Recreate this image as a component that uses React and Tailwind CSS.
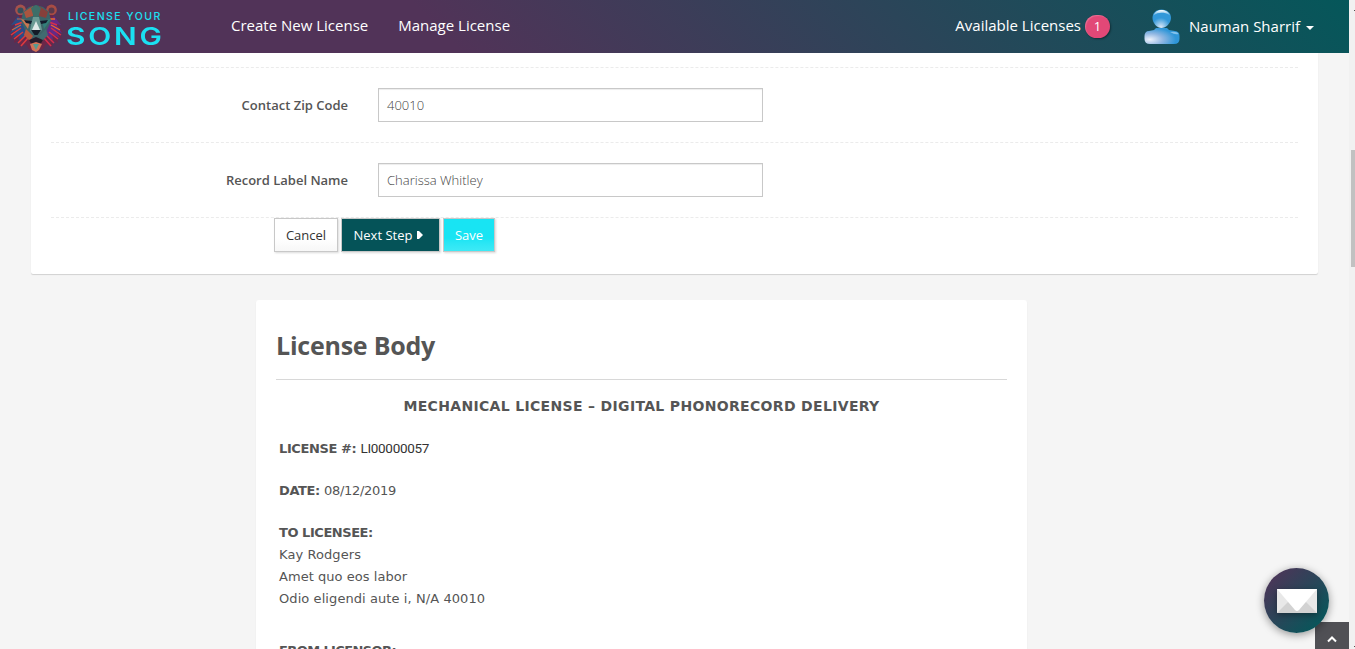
import React from "react";

function LionMark() {
  return (
    <svg width="54" height="48" viewBox="0 0 54 48" className="shrink-0">
      <circle cx="11.500" cy="6" r="5.400" fill="#a5524c" />
      <circle cx="11.500" cy="6.500" r="3" fill="#33505c" />
      <circle cx="42.500" cy="6" r="5.400" fill="#a84c44" />
      <circle cx="42.500" cy="6.500" r="3" fill="#5a3a4c" />
      <path d="M10 11 3 19 6 19 0 28 4 27 1 35 6 32 5 39 10 36 11 43 17 40 20 45 27 48 34 45 37 40 43 43 44 36 49 39 48 32 53 35 50 27 54 28 48 19 51 19 44 11Z" fill="#6c2748" />
      <path d="M9 12 2 21 7 20 1 29 8 26 3 34 11 30 10 36 16 32 16 20Z" fill="#2c4c86" />
      <path d="M45 12 52 21 47 20 53 29 46 26 51 34 43 30 44 36 38 32 38 20Z" fill="#632a86" />
      <path d="M2 31 12 24M5 35 14 28M9 39 17 31M12 42 19 34M6 21 14 18" fill="none" stroke="#de3a3e" strokeWidth="1.500" />
      <path d="M52 31 42 24M49 35 40 28M45 39 37 31M42 42 35 34M48 21 40 18" fill="none" stroke="#d62e4c" strokeWidth="1.500" />
      <path d="M3 26 12 21M8 15 14 15" fill="none" stroke="#c96846" strokeWidth="1.200" />
      <path d="M51 26 42 21M46 15 40 15" fill="none" stroke="#ef6a2c" strokeWidth="1.300" />
      <path d="M14 8 20 3 27 1 34 3 40 8 42 17 38 26 35 35 27 40 19 35 16 26 12 17Z" fill="#3c6468" />
      <path d="M15 8 24 2 24 12 17 14Z" fill="#a9553f" />
      <path d="M39 8 30 2 30 12 37 14Z" fill="#87403b" />
      <path d="M22 4 27 1 32 4 29 14 25 14Z" fill="#3d6e68" />
      <path d="M12 15 21 17 19 25Z" fill="#c87752" />
      <path d="M42 15 33 17 35 25Z" fill="#327f79" />
      <path d="M15 16 23 17 22 20 17 19Z" fill="#131c2c" />
      <path d="M39 16 31 17 32 20 37 19Z" fill="#131c2c" />
      <path d="M24 13 30 13 33 26 27 31 21 26Z" fill="#6a9a94" />
      <path d="M27 17 31 26 23 26Z" fill="#dfe9e8" />
      <path d="M22 26 32 26 28.500 31 25.500 31Z" fill="#141c28" />
      <path d="M17 25 24 32 21 37 15 31Z" fill="#b9583f" />
      <path d="M37 25 30 32 33 37 39 31Z" fill="#416b70" />
      <path d="M20 36 27 33 34 36 31 41 23 41Z" fill="#261b2b" />
      <path d="M21 40 27 38 33 40 30 46 27 48 23 46Z" fill="#d17458" />
      <path d="M24 40 30 40 27 46Z" fill="#569a90" />
    </svg>
  );
}

function Avatar() {
  return (
    <svg width="36" height="36" viewBox="0 0 36 36" className="mt-px shrink-0">
      <defs>
        <radialGradient id="body" cx="0.15" cy="0.72" r="0.75">
          <stop offset="0" stopColor="#eef2fb" />
          <stop offset="0.5" stopColor="#91b7e2" />
          <stop offset="1" stopColor="#2f96d8" />
        </radialGradient>
        <radialGradient id="chin" cx="0.45" cy="0.95" r="0.5">
          <stop offset="0" stopColor="#dce8f8" />
          <stop offset="1" stopColor="#3298d9" />
        </radialGradient>
        <linearGradient id="shine" x1="0" y1="0" x2="0" y2="1">
          <stop offset="0" stopColor="#ffffff" />
          <stop offset="1" stopColor="#52a9e0" />
        </linearGradient>
      </defs>
      <path d="M12 19 10 21 5 22C2 22 .5 24 .5 27V30Q.5 35 6 35H30Q35.500 35 35.500 30V27C35.500 24 34 22.500 31 22L25 21 23 19Z" fill="url(#body)" />
      <path d="M17.500.5C12 .5 8.500 4 8.500 9 8.500 14 13 19 17.500 19S27 14 27 9C27 4 23 .5 17.500 .5Z" fill="url(#chin)" />
      <path d="M9.500 6.500C11 2.500 14 1 17.500 1S24.500 2.500 26 6.500C23 4 20 3.700 17.500 3.700S12 4.300 9.500 6.500Z" fill="url(#shine)" />
      <path d="M26 23Q33 22 34.500 25 31 26 26 23Z" fill="#83c1eb" />
    </svg>
  );
}

function Navbar() {
  return (
    <header className="flex h-[53px] shrink-0 items-center bg-[linear-gradient(45deg,#513358_33%,#05575a_100%)] font-['Open_Sans',sans-serif] text-[15px] text-white">
      <div className="flex w-[216px] items-center pl-[9px] pt-[2px]">
        <LionMark />
        <div className="ml-[4px] flex flex-col pt-[5px] font-[Inter,sans-serif] text-[#1be0f2]">
          <span className="ml-px whitespace-nowrap text-[10.500px] font-medium leading-[12px] tracking-[1.450px]">LICENSE YOUR</span>
          <span className="-ml-px origin-left scale-x-[1.220] whitespace-nowrap text-[24.500px] font-semibold leading-[26px] tracking-[2.300px]">SONG</span>
        </div>
      </div>
      <nav className="flex gap-[30px] pb-[2px] pl-[15px]">
        <a>Create New License</a>
        <a>Manage License</a>
      </nav>
      <div className="ml-auto flex items-center pr-[35px]">
        <span className="pb-[2px]">Available Licenses</span>
        <span className="ml-[4px] flex h-[23px] w-[25px] items-center justify-center rounded-full bg-[#e24877] text-[13px] shadow-[1px_1px_2px_rgba(0,0,0,0.4),inset_1px_1px_1px_rgba(255,255,255,0.2)]">1</span>
        <span className="ml-[34px] flex items-center gap-[9px]">
          <Avatar />
          <span>Nauman Sharrif</span>
        </span>
        <span className="ml-[6px] mt-[3px] border-x-4 border-t-4 border-x-transparent border-t-white" />
      </div>
    </header>
  );
}

function Field({ label, value }) {
  return (
    <div className="flex h-[75px] items-center border-b border-dashed border-[#ebebeb]">
      <label className="w-[297px] pt-[2px] text-right text-[13px] font-semibold text-[#555]">{label}</label>
      <div className="ml-[30px] flex h-[34px] w-[385px] items-center border border-[#c8c8c8] px-2 pt-[2px] text-[13px] font-light text-[#444] shadow-[inset_0_1px_1px_rgba(0,0,0,0.075)]">{value}</div>
    </div>
  );
}

function FormPanel() {
  return (
    <section className="mx-[31px] h-[221px] shrink-0 rounded-b-[2px] bg-white px-5 font-['Open_Sans',sans-serif] shadow-[0_1px_1px_rgba(0,0,0,0.15)]">
      <div className="h-[15px] border-b border-dashed border-[#ebebeb]" />
      <Field label="Contact Zip Code" value="40010" />
      <Field label="Record Label Name" value="Charissa Whitley" />
      <div className="flex gap-[3px] pl-[223px] text-[13px]">
        <button className="h-[34px] w-[64px] border border-[#c8c8c8] bg-linear-to-b from-white from-60% to-[#f7f7f7] pt-[2px] text-[#333] shadow-[1px_1px_2px_rgba(0,0,0,0.15)]">Cancel</button>
        <button className="flex h-[34px] w-[99px] items-center border border-[#c8c8c8] bg-[#055358] pl-[11.500px] text-white shadow-[1px_1px_2px_rgba(0,0,0,0.15)]">
          <span className="pt-[2px]">Next Step</span>
          <svg width="6" height="8" viewBox="0 0 6 8" className="ml-[5px]"><path d="M0 0H2L6 4 2 8H0Z" fill="white" /></svg>
        </button>
        <button className="h-[34px] w-[52px] border border-[#c8c8c8] bg-linear-to-b from-[#18e4f3] from-60% to-[#3deaf6] pt-[2px] text-white shadow-[1px_1px_2px_rgba(0,0,0,0.15)]">Save</button>
      </div>
    </section>
  );
}

function LicenseBody() {
  return (
    <section className="ml-[256px] mt-[26px] h-[500px] w-[771px] shrink-0 rounded-[3px] bg-white px-5 shadow-[0_1px_1px_rgba(0,0,0,0.12)]">
      <h1 className="flex h-[80px] items-center border-b border-[#d8d8d8] pt-[12px] font-['Open_Sans',sans-serif] text-[25px] font-bold tracking-[-0.230px] text-[#555]">License Body</h1>
      <div className="px-[3px] pt-[15px] font-[Verdana,'DejaVu_Sans',sans-serif] text-[13px] leading-[22px] text-[#555]">
        <p className="text-center text-[14px] font-bold tracking-[0.330px]">MECHANICAL LICENSE – DIGITAL PHONORECORD DELIVERY</p>
        <p className="mt-5"><b className="tracking-[-0.400px]">LICENSE #:</b> <span className="font-[Roboto,sans-serif] text-[13.500px] tracking-[-0.300px] text-[#333]">LI00000057</span></p>
        <p className="mt-5"><b className="tracking-[-0.400px]">DATE:</b> <span className="tracking-[-0.300px]">08/12/2019</span></p>
        <p className="mt-5 font-bold tracking-[-0.450px]">TO LICENSEE:</p>
        <p className="tracking-[0.080px]">Kay Rodgers</p>
        <p className="tracking-[0.040px]">Amet quo eos labor</p>
        <p className="tracking-[0.080px]">Odio eligendi aute i, N/A 40010</p>
        <p className="mt-[30px] font-bold tracking-[-0.600px]">FROM LICENSOR:</p>
      </div>
    </section>
  );
}

export default function App() {
  return (
    <div className="relative flex h-[649px] w-[1355px] overflow-hidden bg-[#f5f5f5]">
      <main className="flex w-[1349px] flex-col overflow-hidden">
        <Navbar />
        <FormPanel />
        <LicenseBody />
      </main>
      <aside className="flex w-[6px] flex-col bg-[#f1f1f1] pl-[2px]">
        <div className="ml-auto mt-[10px] size-px bg-[#505050]" />
        <div className="mt-[139px] h-[117px] bg-[#c1c1c1]" />
        <div className="ml-auto mt-[379px] size-px bg-[#505050]" />
      </aside>
      <button className="absolute left-[1315px] top-[622px] flex h-[27px] w-[34px] items-center justify-center bg-[#505055] pt-[7px]">
        <svg width="10" height="7" viewBox="0 0 10 7"><path d="M1 5.500 5 1.500 9 5.500" fill="none" stroke="white" strokeWidth="2" /></svg>
      </button>
      <button className="absolute left-[1264px] top-[568px] flex size-[65px] items-center justify-center rounded-full bg-[linear-gradient(135deg,#513358_5%,#05575a_90%)] shadow-[0_2px_8px_rgba(0,0,0,0.4)]">
        <svg width="40" height="24" viewBox="0 0 40 24" className="mt-px drop-shadow-[0_2px_3px_rgba(0,0,0,0.35)]">
          <rect width="40" height="24" fill="#e8e8e8" />
          <path d="M0 24 12 12H28L40 24Z" fill="#d2d2d2" />
          <path d="M0 0H40L22 21Q20 23 18 21Z" fill="white" />
        </svg>
      </button>
    </div>
  );
}
